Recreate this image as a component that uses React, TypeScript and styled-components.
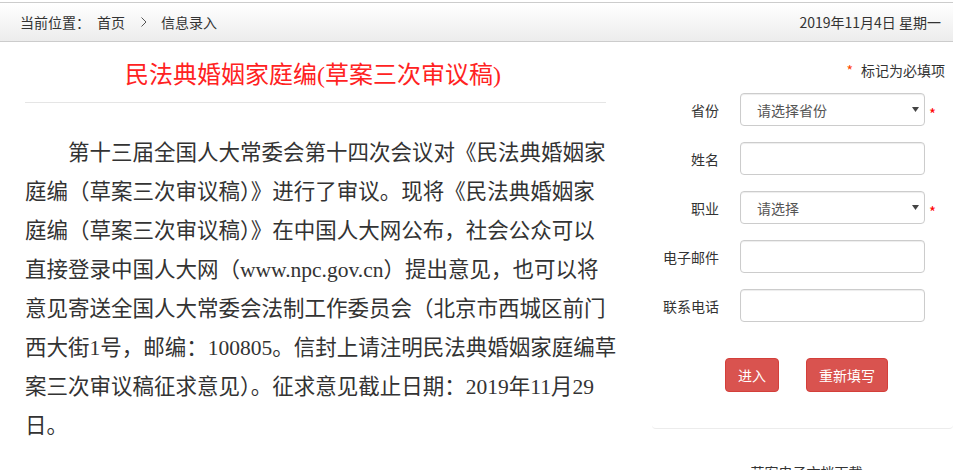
import styled, { createGlobalStyle } from "styled-components";

const GlobalStyle = createGlobalStyle`
  body {
    margin: 0;
    background: #fff;
    color: #333;
    font-family: "Noto Sans CJK SC", sans-serif;
  }
`;

const Page = styled.div`
  width: 953px;
  padding-top: 2px;
`;

const TopBar = styled.div`
  display: flex;
  align-items: center;
  justify-content: space-between;
  height: 38px;
  padding: 0 12px 0 20px;
  border-top: 1px solid #ccc;
  border-bottom: 1px solid #ccc;
  background: linear-gradient(#fff, #ececec);
  font-size: 14px;
  color: #333;
`;

const Crumbs = styled.div`
  display: flex;
  align-items: center;
`;

const Crumb = styled.span<{ $gap?: number }>`
  margin-right: ${(p) => p.$gap ?? 0}px;
`;

const Chevron = styled.svg`
  margin-right: 14px;
`;

const Main = styled.div`
  display: flex;
`;

const Article = styled.div`
  width: 581px;
  padding: 13px 46px 0 25px;
`;

const Title = styled.h1`
  margin: 0;
  height: 40px;
  padding-right: 5px;
  line-height: 40px;
  text-align: center;
  font-family: "Liberation Serif", "Noto Sans CJK SC", serif;
  font-size: 24px;
  font-weight: normal;
  color: #f22;
`;

const Divider = styled.div`
  margin-top: 7px;
  border-top: 1px solid #e5e5e5;
`;

const Body = styled.p`
  margin: 31px 0 0;
  white-space: nowrap;
  text-indent: 2em;
  font-family: "Liberation Serif", "Noto Sans CJK SC", serif;
  font-size: 21.5px;
  line-height: 39px;
  color: #333;
`;

const Side = styled.div`
  width: 301px;
`;

const Panel = styled.div`
  padding: 18px 8px 36px 0;
  border-bottom: 1px solid #ececec;
  border-radius: 0 0 4px 4px;
`;

const Note = styled.div`
  text-align: right;
  font-size: 14px;
  line-height: 20px;
  span {
    margin-right: 8px;
    color: #f40;
  }
`;

const Form = styled.div`
  display: flex;
  flex-direction: column;
  gap: 16px;
  margin-top: 13px;
`;

const Row = styled.div`
  display: flex;
  align-items: center;
  height: 33px;
`;

const Label = styled.label`
  width: 67px;
  margin-right: 21px;
  text-align: right;
  font-size: 14px;
  color: #333;
`;

const Field = styled.div`
  position: relative;
  width: 185px;
  height: 33px;
`;

const controlStyle = `
  box-sizing: border-box;
  width: 100%;
  height: 100%;
  margin: 0;
  padding: 0 16px;
  border: 1px solid #ccc;
  border-radius: 4px;
  background: #fff;
  box-shadow: inset 0 1px 1px rgba(0, 0, 0, 0.075);
  font-family: "Noto Sans CJK SC", sans-serif;
  font-size: 14px;
  color: #555;
  outline: none;
`;

const TextInput = styled.input`
  ${controlStyle}
`;

const Select = styled.select`
  ${controlStyle}
  appearance: none;
  -webkit-appearance: none;
`;

const Arrow = styled.svg`
  position: absolute;
  right: 6px;
  top: 14px;
  pointer-events: none;
`;

const Required = styled.span`
  margin-left: 4px;
  padding-top: 8px;
  font-size: 15px;
  line-height: 15px;
  color: #f00;
`;

const Actions = styled.div`
  display: flex;
  gap: 27px;
  margin-top: 36px;
  padding-left: 73px;
`;

const Button = styled.button`
  height: 34px;
  padding: 0 12px;
  border: 1px solid #d43f3a;
  border-radius: 4px;
  background: #d9534f;
  color: #fff;
  font-family: "Noto Sans CJK SC", sans-serif;
  font-size: 14px;
`;

const Download = styled.div`
  margin-top: 33px;
  padding-left: 8px;
  text-align: center;
  font-size: 14px;
  line-height: 20px;
  color: #333;
`;

const SelectField = ({ placeholder }: { placeholder: string }) => (
  <Field>
    <Select defaultValue="">
      <option value="">{placeholder}</option>
    </Select>
    <Arrow width="7" height="5" viewBox="0 0 7 5">
      <polygon points="0,0 7,0 3.5,5" fill="#444" />
    </Arrow>
  </Field>
);

const App = () => {
  return (
    <Page>
      <GlobalStyle />
      <TopBar>
        <Crumbs>
          <Crumb $gap={7}>当前位置：</Crumb>
          <Crumb $gap={16}>首页</Crumb>
          <Chevron width="6" height="10" viewBox="0 0 6 10">
            <polyline points="0.5,0.5 5,5 0.5,9.5" fill="none" stroke="#555" strokeWidth="1" />
          </Chevron>
          <Crumb>信息录入</Crumb>
        </Crumbs>
        <div>2019年11月4日 星期一</div>
      </TopBar>
      <Main>
        <Article>
          <Title>民法典婚姻家庭编(草案三次审议稿)</Title>
          <Divider />
          <Body>
            第十三届全国人大常委会第十四次会议对《民法典婚姻家
            <br />
            庭编（草案三次审议稿）》进行了审议。现将《民法典婚姻家
            <br />
            庭编（草案三次审议稿）》在中国人大网公布，社会公众可以
            <br />
            直接登录中国人大网（www.npc.gov.cn）提出意见，也可以将
            <br />
            意见寄送全国人大常委会法制工作委员会（北京市西城区前门
            <br />
            西大街1号，邮编：100805。信封上请注明民法典婚姻家庭编草
            <br />
            案三次审议稿征求意见）。征求意见截止日期：2019年11月29
            <br />
            日。
          </Body>
        </Article>
        <Side>
          <Panel>
            <Note>
              <span>*</span>标记为必填项
            </Note>
            <Form>
              <Row>
                <Label>省份</Label>
                <SelectField placeholder="请选择省份" />
                <Required>*</Required>
              </Row>
              <Row>
                <Label>姓名</Label>
                <Field>
                  <TextInput type="text" />
                </Field>
              </Row>
              <Row>
                <Label>职业</Label>
                <SelectField placeholder="请选择" />
                <Required>*</Required>
              </Row>
              <Row>
                <Label>电子邮件</Label>
                <Field>
                  <TextInput type="text" />
                </Field>
              </Row>
              <Row>
                <Label>联系电话</Label>
                <Field>
                  <TextInput type="text" />
                </Field>
              </Row>
            </Form>
            <Actions>
              <Button>进入</Button>
              <Button>重新填写</Button>
            </Actions>
          </Panel>
          <Download>草案电子文档下载</Download>
        </Side>
      </Main>
    </Page>
  );
};

export default App;
